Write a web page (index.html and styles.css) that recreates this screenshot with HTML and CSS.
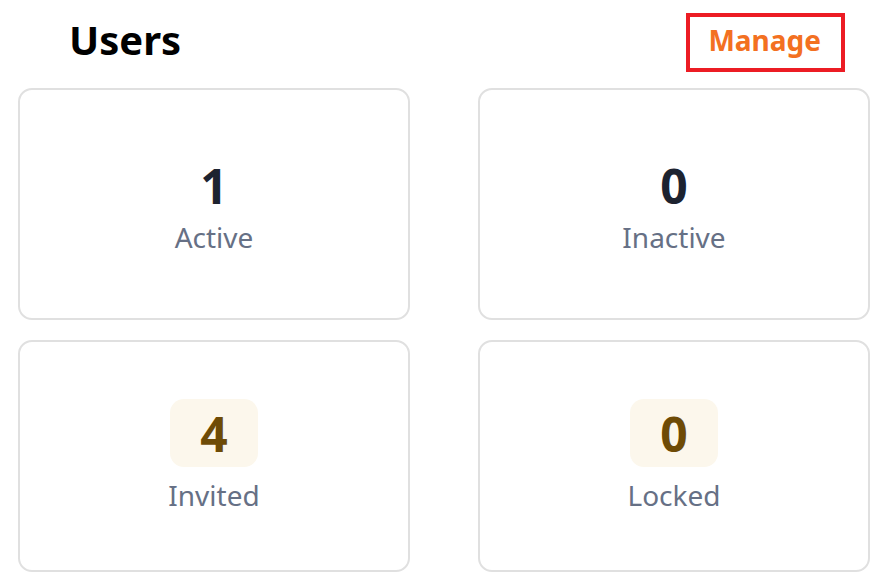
FILE: index.html
```html
<!DOCTYPE html>
<html lang="en">
<head>
  <meta charset="UTF-8">
  <meta name="viewport" content="width=device-width, initial-scale=1.0">
  <title>Users</title>
  <link rel="stylesheet" href="styles.css">
</head>
<body>
  <header class="users-header">
    <h1>Users</h1>
    <a class="manage-link" href="#">Manage</a>
  </header>

  <main class="user-stats">
    <!-- Estado de usuarios -->
    <div class="stat-card">
      <p class="stat-value">1</p>
      <p class="stat-label">Active</p>
    </div>
    <div class="stat-card">
      <p class="stat-value">0</p>
      <p class="stat-label">Inactive</p>
    </div>
    <div class="stat-card">
      <p class="stat-value badge">4</p>
      <p class="stat-label">Invited</p>
    </div>
    <div class="stat-card">
      <p class="stat-value badge">0</p>
      <p class="stat-label">Locked</p>
    </div>
  </main>
</body>
</html>
```

FILE: styles.css
```css
* {
  margin: 0;
  padding: 0;
  box-sizing: border-box;
}

body {
  font-family: "Noto Sans", "Open Sans", Arial, sans-serif;
  background-color: #ffffff;
  color: #1d2330;
}

.users-header {
  display: flex;
  justify-content: space-between;
  align-items: flex-start;
  padding: 13px 42px 0 69px;
  height: 88px;
}

.users-header h1 {
  font-size: 40px;
  font-weight: 700;
  color: #000;
  line-height: 54px;
}

.manage-link {
  display: block;
  border: 4px solid #ec1c24;
  padding: 4px 20px 9px 18px;
  font-size: 28px;
  font-weight: 700;
  line-height: 38px;
  color: #f37021;
  text-decoration: none;
}

.user-stats {
  display: grid;
  grid-template-columns: 1fr 1fr;
  column-gap: 68px;
  row-gap: 20px;
  padding: 0 17px 0 18px;
}

.stat-card {
  height: 232px;
  border: 2px solid #e0e0e0;
  border-radius: 14px;
  display: flex;
  flex-direction: column;
  align-items: center;
  justify-content: center;
  text-align: center;
}

.stat-value {
  font-size: 48px;
  font-weight: 700;
  line-height: 65px;
  color: #1d2330;
  margin-bottom: 0;
}

.stat-value.badge {
  background-color: #fcf7ec;
  color: #6e4b06;
  border-radius: 14px;
  padding: 2px 30px 1px;
  margin-bottom: 9px;
}

.stat-label {
  font-size: 28px;
  line-height: 38px;
  color: #667085;
}
```
